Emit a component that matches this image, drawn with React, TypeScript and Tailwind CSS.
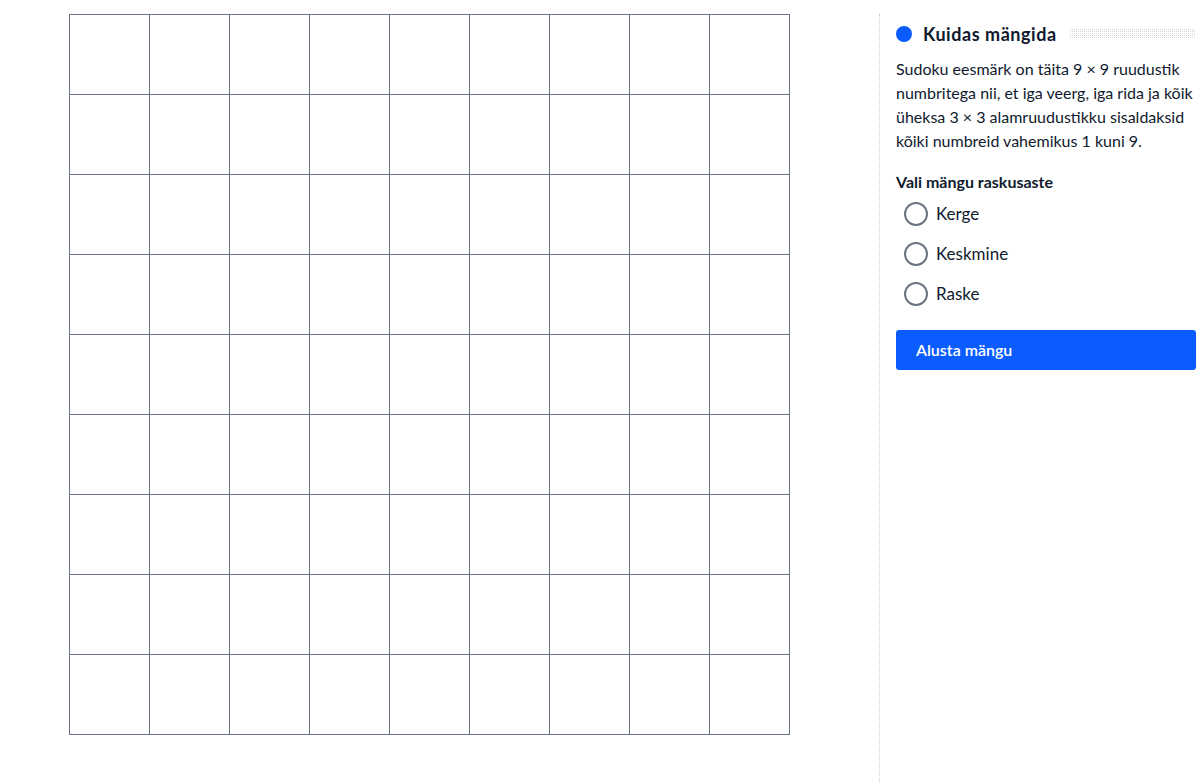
import { useState } from 'react';

const levels = ['Kerge', 'Keskmine', 'Raske'];

const SudokuGrid = () => {
  const cells = Array.from({ length: 81 }, (_, i) => i);
  return (
    <div className="grid grid-cols-[repeat(9,80px)] border-l border-t border-[#6b7588] shrink-0 self-start">
      {cells.map((i) => (
        <div key={i} className="h-20 border-r border-b border-[#6b7588] bg-white" />
      ))}
    </div>
  );
};

const App = () => {
  const [level, setLevel] = useState<string | null>(null);

  return (
    <div className="flex w-[1202px] h-[782px] bg-white pt-[14px] pl-[69px] font-['Lato','Liberation_Sans',sans-serif] text-[#0f1a2e] overflow-hidden">
      <SudokuGrid />

      <div className="ml-[89px] h-[768px] border-l border-dotted border-[#c9ccd1] pl-4 pt-2 w-[317px]">
        <div className="flex items-center h-6 w-[300px]">
          <span className="h-4 w-4 rounded-full bg-[#0a5cff] shrink-0" />
          <h2 className="ml-[11px] text-[18px] tracking-[0.03em] font-bold whitespace-nowrap">Kuidas mängida</h2>
          <div className="ml-3 flex-1 h-[10px] bg-[conic-gradient(#d5d8dd_25%,transparent_0)] bg-[length:2px_2px]" />
        </div>

        <p className="mt-[11px] text-[16px] leading-6 whitespace-nowrap">
          Sudoku eesmärk on täita 9 × 9 ruudustik
          <br />
          numbritega nii, et iga veerg, iga rida ja kõik
          <br />
          üheksa 3 × 3 alamruudustikku sisaldaksid
          <br />
          kõiki numbreid vahemikus 1 kuni 9.
        </p>

        <h3 className="mt-[17px] text-[16px] leading-6 font-bold">Vali mängu raskusaste</h3>

        <div className="flex flex-col">
          {levels.map((l) => (
            <label key={l} className="flex items-center h-10 pl-2 cursor-pointer">
              <button
                type="button"
                onClick={() => setLevel(l)}
                className="h-6 w-6 rounded-full border-2 border-[#6b7280] flex items-center justify-center"
              >
                {level === l && <span className="h-3 w-3 rounded-full bg-[#0a5cff]" />}
              </button>
              <span className="ml-2 text-[17px]">{l}</span>
            </label>
          ))}
        </div>

        <button
          type="button"
          className="mt-4 w-[300px] h-10 rounded-[3px] bg-[#0a5cff] text-white text-[16px] font-semibold text-left pl-5"
        >
          Alusta mängu
        </button>
      </div>
    </div>
  );
};

export default App;
